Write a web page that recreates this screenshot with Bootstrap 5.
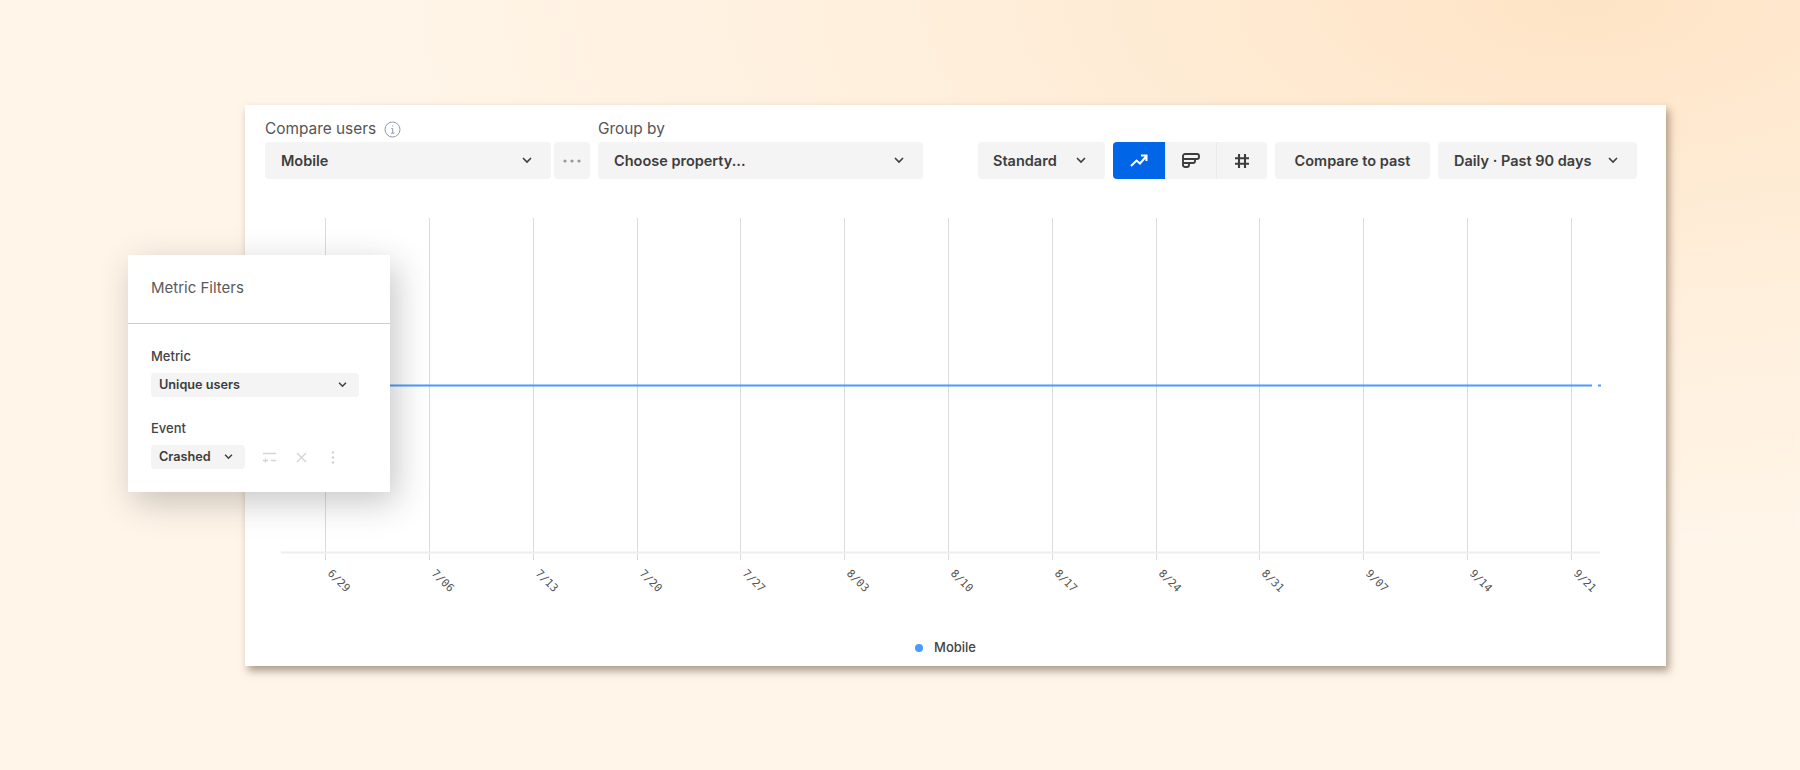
<!DOCTYPE html>
<html lang="en">
<head>
  <meta charset="UTF-8">
  <meta name="viewport" content="width=device-width, initial-scale=1">
  <title>Compare users</title>
  <link href="https://cdn.jsdelivr.net/npm/bootstrap@5.3.2/dist/css/bootstrap.min.css" rel="stylesheet">
  <style>
    body {
      margin: 0;
      height: 770px;
      overflow: hidden;
      font-family: "Inter", "Liberation Sans", sans-serif;
      color: #3d3d3d;
      background: radial-gradient(ellipse 1250px 560px at 88% 0%, #fee4c6 0%, #fff0de 60%, #fff5e9 100%), #fff5e9;
    }
    .stage { padding: 105px 134px 0 245px; }
    .report-card {
      width: 1421px;
      height: 561px;
      background: #fff;
      box-shadow: 3px 5px 8px rgba(90, 70, 45, .5);
    }
    .toolbar { padding: 11px 29px 0 20px; }
    .field-label { font-size: 15.4px; line-height: 26px; color: #555; }
    .tool-btn {
      height: 37px;
      padding: 0 19px 0 16px;
      border: 0;
      border-radius: 4px;
      background: #f4f4f4;
      color: #3d3d3d;
      font-size: 14.5px;
      font-weight: 600;
      white-space: nowrap;
    }
    .tool-btn:hover { background: #ececec; color: #3d3d3d; }
    .w-mobile { width: 286px; }
    .w-dots { width: 36px; padding: 0; margin-left: 3px; margin-right: 8px; }
    .w-group { width: 325px; }
    .w-standard { width: 127px; padding-left: 15px; }
    .w-compare { width: 155px; padding: 0; justify-content: center; }
    .w-daily { width: 199px; }
    .seg-btn {
      width: 51px;
      height: 37px;
      border: 0;
      background: #f4f4f4;
      padding: 0;
      border-left: 1px solid #ebebeb;
    }
    .seg-btn:first-child { border-left: 0; border-radius: 4px 0 0 4px; background: #0165e8; width: 52px; }
    .seg-btn:last-child { border-radius: 0 4px 4px 0; }
    .chart-svg { display: block; }
    .tick-label { font-family: "DejaVu Sans Mono", monospace; font-size: 11px; fill: #555; }
    .legend-row { height: 36px; padding-right: 20px; font-size: 13px; font-weight: 500; color: #444; }
    .legend-dot { width: 8px; height: 8px; border-radius: 50%; background: #4a9bff; margin-right: 11px; }
    .filter-panel {
      left: -117px;
      top: 150px;
      width: 262px;
      height: 237px;
      background: #fff;
      box-shadow: 6px 10px 32px rgba(40, 40, 40, .26);
    }
    .panel-head { height: 69px; padding: 0 23px 1px; font-size: 15px; color: #5a5a5a; border-bottom: 1px solid #c9cfcf; }
    .panel-body-wrap { padding: 22px 23px 0; }
    .mini-label { font-size: 13px; font-weight: 500; line-height: 20px; color: #444; }
    .mini-btn {
      height: 24px;
      padding: 0 12px 0 8px;
      border: 0;
      border-radius: 4px;
      background: #f4f4f4;
      font-size: 12.7px;
      font-weight: 600;
      color: #3d3d3d;
    }
    .w-metric { width: 208px; margin: 7px 0 21px; }
    .w-crashed { width: 94px; }
    .event-row { margin-top: 7px; }
    .icon-cell { width: 32px; }
  </style>
</head>
<body>
  <div class="stage">
    <div class="report-card position-relative d-flex flex-column">

      <div class="toolbar d-flex align-items-end">
        <div>
          <div class="field-label d-flex align-items-center gap-2">
            Compare users
            <svg width="17" height="17" viewBox="0 0 17 17" fill="none" stroke="#8d99ae" stroke-width="1"><circle cx="8.5" cy="8.5" r="7.5"/><path d="M7.3 7.5h1.4v4.5M7 12.2h3.400M8.500 4.500v1"/></svg>
          </div>
          <div class="d-flex">
            <button class="btn tool-btn w-mobile d-flex align-items-center justify-content-between">Mobile
              <svg width="10" height="7" viewBox="0 0 10 7" fill="none" stroke="#3d3d3d" stroke-width="1.6"><path d="M1 1l4 4 4-4"/></svg>
            </button>
            <button class="btn tool-btn w-dots d-flex align-items-center justify-content-center">
              <svg width="18" height="4" viewBox="0 0 18 4" fill="#999"><circle cx="2" cy="2" r="1.6"/><circle cx="9" cy="2" r="1.6"/><circle cx="16" cy="2" r="1.6"/></svg>
            </button>
          </div>
        </div>
        <div>
          <div class="field-label">Group by</div>
          <button class="btn tool-btn w-group d-flex align-items-center justify-content-between">Choose property...
            <svg width="10" height="7" viewBox="0 0 10 7" fill="none" stroke="#3d3d3d" stroke-width="1.6"><path d="M1 1l4 4 4-4"/></svg>
          </button>
        </div>

        <div class="ms-auto d-flex gap-2">
          <button class="btn tool-btn w-standard d-flex align-items-center justify-content-between">Standard
            <svg width="10" height="7" viewBox="0 0 10 7" fill="none" stroke="#3d3d3d" stroke-width="1.6"><path d="M1 1l4 4 4-4"/></svg>
          </button>
          <div class="btn-group">
            <button class="seg-btn d-flex align-items-center justify-content-center">
              <svg width="18" height="13" viewBox="0 0 18 13" fill="none" stroke="#fff" stroke-width="2"><path d="M1 12l5.500-5.500 3.500 3L16.500 2M11 1.500h5.500V7"/></svg>
            </button>
            <button class="seg-btn d-flex align-items-center justify-content-center">
              <svg width="18" height="15" viewBox="0 0 18 15" fill="none" stroke="#3d3d3d" stroke-width="1.9"><path d="M1 3a2 2 0 0 1 2-2h12a2 2 0 0 1 2 2v1a2 2 0 0 1-2 2h-2v2a2 2 0 0 1-2 2H7v2a2 2 0 0 1-2 2H3a2 2 0 0 1-2-2zM1 6h12M1 10h6"/></svg>
            </button>
            <button class="seg-btn d-flex align-items-center justify-content-center">
              <svg width="16" height="16" viewBox="0 0 16 16" fill="none" stroke="#3d3d3d" stroke-width="2.1"><path d="M5 1v14M11 1v14M1 5.200h14M1 10.800h14"/></svg>
            </button>
          </div>
          <button class="btn tool-btn w-compare d-flex align-items-center">Compare to past</button>
          <button class="btn tool-btn w-daily d-flex align-items-center justify-content-between">Daily · Past 90 days
            <svg width="10" height="7" viewBox="0 0 10 7" fill="none" stroke="#3d3d3d" stroke-width="1.6"><path d="M1 1l4 4 4-4"/></svg>
          </button>
        </div>
      </div>

      <svg class="chart-svg" width="1421" height="451" viewBox="245 179 1421 451">
        <g stroke="#dcdcdc" stroke-width="1">
          <path d="M325.500 218V560M429.500 218V560M533.500 218V560M637.500 218V560M740.500 218V560M844.500 218V560M948.500 218V560M1052.500 218V560M1156.500 218V560M1259.500 218V560M1363.500 218V560M1467.500 218V560M1571.500 218V560"/>
        </g>
        <path d="M281 552.500H1600" stroke="#eeeeee" stroke-width="2"/>
        <path d="M325 385.500H1592" stroke="#4a9bff" stroke-width="2"/>
        <path d="M1598 385.500H1601" stroke="#4a9bff" stroke-width="2"/>
        <g class="tick-label">
          <text transform="translate(327 574) rotate(45)">6/29</text>
          <text transform="translate(431 574) rotate(45)">7/06</text>
          <text transform="translate(535 574) rotate(45)">7/13</text>
          <text transform="translate(639 574) rotate(45)">7/20</text>
          <text transform="translate(742 574) rotate(45)">7/27</text>
          <text transform="translate(846 574) rotate(45)">8/03</text>
          <text transform="translate(950 574) rotate(45)">8/10</text>
          <text transform="translate(1054 574) rotate(45)">8/17</text>
          <text transform="translate(1158 574) rotate(45)">8/24</text>
          <text transform="translate(1261 574) rotate(45)">8/31</text>
          <text transform="translate(1365 574) rotate(45)">9/07</text>
          <text transform="translate(1469 574) rotate(45)">9/14</text>
          <text transform="translate(1573 574) rotate(45)">9/21</text>
        </g>
      </svg>

      <div class="legend-row d-flex align-items-center justify-content-center">
        <span class="legend-dot"></span>Mobile
      </div>

      <div class="filter-panel position-absolute">
        <div class="panel-head d-flex align-items-center">Metric Filters</div>
        <div class="panel-body-wrap">
          <div class="mini-label">Metric</div>
          <button class="btn mini-btn w-metric d-flex align-items-center justify-content-between">Unique users
            <svg width="9" height="6" viewBox="0 0 10 7" fill="none" stroke="#3d3d3d" stroke-width="1.7"><path d="M1 1l4 4 4-4"/></svg>
          </button>
          <div class="mini-label">Event</div>
          <div class="event-row d-flex align-items-center">
            <button class="btn mini-btn w-crashed d-flex align-items-center justify-content-between">Crashed
              <svg width="9" height="6" viewBox="0 0 10 7" fill="none" stroke="#3d3d3d" stroke-width="1.7"><path d="M1 1l4 4 4-4"/></svg>
            </button>
            <div class="d-flex align-items-center ms-2">
              <div class="icon-cell d-flex justify-content-center">
                <svg width="15" height="11" viewBox="0 0 15 11" fill="none" stroke="#d4d4d4" stroke-width="1.3"><path d="M1 1.500h13M6 8.500H1M3.500 6.500v4M9 8.500h5"/></svg>
              </div>
              <div class="icon-cell d-flex justify-content-center">
                <svg width="11" height="11" viewBox="0 0 11 11" fill="none" stroke="#d4d4d4" stroke-width="1.4"><path d="M1 1l9 9M10 1l-9 9"/></svg>
              </div>
              <div class="icon-cell d-flex justify-content-center">
                <svg width="4" height="13" viewBox="0 0 4 13" fill="#d4d4d4"><circle cx="2" cy="1.500" r="1.300"/><circle cx="2" cy="6.500" r="1.300"/><circle cx="2" cy="11.500" r="1.300"/></svg>
              </div>
            </div>
          </div>
        </div>
      </div>

    </div>
  </div>
  <script src="https://cdn.jsdelivr.net/npm/bootstrap@5.3.2/dist/js/bootstrap.bundle.min.js"></script>
</body>
</html>
